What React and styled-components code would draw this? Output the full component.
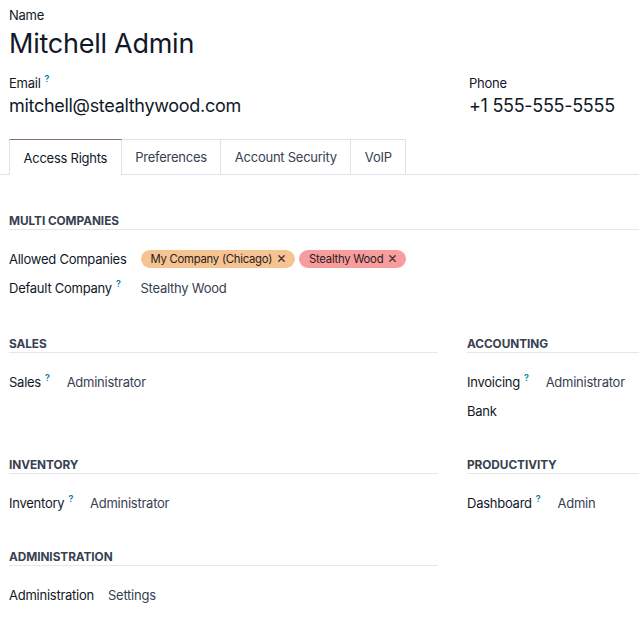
import React from 'react';
import styled, { createGlobalStyle } from 'styled-components';

const GlobalStyle = createGlobalStyle`
  body {
    margin: 0;
    background: #fff;
    font-family: Inter, "Noto Sans", "Liberation Sans", sans-serif;
    color: #111827;
    letter-spacing: -0.25px;
  }
`;

const tabs = ['Access Rights', 'Preferences', 'Account Security', 'VoIP'];

const CloseIcon = () => (
  <svg width="7" height="7" viewBox="0 0 7 7">
    <path d="M0.8 0.8 L6.2 6.2 M6.2 0.8 L0.8 6.2" stroke="currentColor" strokeWidth="1.4" strokeLinecap="round" />
  </svg>
);

export default function App() {
  return (
    <Sheet>
      <GlobalStyle />
      <Header>
        <div>
          <Label>Name</Label>
          <Title>Mitchell Admin</Title>
        </div>
        <Contacts>
          <Field>
            <Label>Email<Help>?</Help></Label>
            <BigValue>mitchell@stealthywood.com</BigValue>
          </Field>
          <Field>
            <Label>Phone</Label>
            <BigValue>+1 555-555-5555</BigValue>
          </Field>
        </Contacts>
      </Header>

      <TabBar>
        {tabs.map((t, i) => (
          <Tab key={t} active={i === 0}>{t}</Tab>
        ))}
      </TabBar>

      <Body>
        <Group>
          <GroupTitle>Multi Companies</GroupTitle>
          <Rows>
            <RowLabel>Allowed Companies</RowLabel>
            <Tags>
              <Tag color="#f5c492">My Company (Chicago)<X><CloseIcon /></X></Tag>
              <Tag color="#f79d9d">Stealthy Wood<X><CloseIcon /></X></Tag>
            </Tags>
            <RowLabel>Default Company<Help>?</Help></RowLabel>
            <RowValue>Stealthy Wood</RowValue>
          </Rows>
        </Group>

        <Columns>
          <Group>
            <GroupTitle>Sales</GroupTitle>
            <Rows>
              <RowLabel>Sales<Help>?</Help></RowLabel>
              <RowValue>Administrator</RowValue>
            </Rows>
          </Group>
          <Group>
            <GroupTitle>Accounting</GroupTitle>
            <Rows>
              <RowLabel>Invoicing<Help>?</Help></RowLabel>
              <RowValue>Administrator</RowValue>
              <RowLabel>Bank</RowLabel>
              <RowValue />
            </Rows>
          </Group>
          <Group>
            <GroupTitle>Inventory</GroupTitle>
            <Rows>
              <RowLabel>Inventory<Help>?</Help></RowLabel>
              <RowValue>Administrator</RowValue>
            </Rows>
          </Group>
          <Group>
            <GroupTitle>Productivity</GroupTitle>
            <Rows>
              <RowLabel>Dashboard<Help>?</Help></RowLabel>
              <RowValue>Admin</RowValue>
            </Rows>
          </Group>
          <Group>
            <GroupTitle>Administration</GroupTitle>
            <Rows>
              <RowLabel>Administration</RowLabel>
              <RowValue>Settings</RowValue>
            </Rows>
          </Group>
        </Columns>
      </Body>
    </Sheet>
  );
}

const Sheet = styled.div`
  width: 639px;
  height: 643px;
  overflow: hidden;
`;

const Header = styled.div`
  padding: 7px 0 0 9px;
`;

const Label = styled.div`
  font-size: 13px;
  line-height: 16px;
  color: #111827;
`;

const Help = styled.sup`
  color: #0180a5;
  font-size: 9px;
  font-weight: 600;
  margin: 0 3px 0 4px;
  vertical-align: 6px;
  line-height: 0;
`;

const Title = styled.h1`
  margin: 2px 0 0;
  font-size: 27px;
  font-weight: 400;
  line-height: 38px;
  color: #111827;
`;

const Contacts = styled.div`
  display: grid;
  grid-template-columns: 429px 1fr;
  column-gap: 31px;
  margin-top: 12px;
`;

const Field = styled.div`
  display: flex;
  flex-direction: column;
  gap: 2px;
`;

const BigValue = styled.div`
  font-size: 18px;
  line-height: 26px;
  letter-spacing: -0.3px;
  color: #111827;
`;

const TabBar = styled.div`
  display: flex;
  margin-top: 20px;
  padding-left: 9px;
  border-bottom: 1px solid #dee2e6;
`;

const Tab = styled.div`
  padding: 0 13.5px;
  display: flex;
  align-items: center;
  font-size: 13px;
  color: ${p => (p.active ? '#111827' : '#374151')};
  background: #fff;
  border: 1px solid #dee2e6;
  border-top-color: ${p => (p.active ? '#8a6a82' : '#dee2e6')};
  border-bottom: none;
  margin-bottom: ${p => (p.active ? '-1px' : '0')};
  height: ${p => (p.active ? '35px' : '34px')};
  & + & {
    border-left: none;
  }
`;

const Body = styled.div`
  padding: 39px 0 0 9px;
`;

const Columns = styled.div`
  display: grid;
  grid-template-columns: 429px 1fr;
  column-gap: 29px;
  row-gap: 33px;
  margin-top: 35px;
`;

const Group = styled.section`
  display: flex;
  flex-direction: column;
`;

const GroupTitle = styled.h3`
  margin: 0;
  font-size: 11.8px;
  font-weight: 700;
  line-height: 14px;
  letter-spacing: -0.05px;
  text-transform: uppercase;
  color: #374151;
  padding-bottom: 1px;
  border-bottom: 1px solid #e5e7eb;
`;

const Rows = styled.div`
  display: grid;
  grid-template-columns: max-content 1fr;
  column-gap: 14px;
  grid-auto-rows: 29px;
  align-items: center;
  margin-top: 14px;
`;

const RowLabel = styled.div`
  font-size: 13px;
  color: #111827;
  white-space: nowrap;
`;

const RowValue = styled.div`
  font-size: 13px;
  color: #374151;
  white-space: nowrap;
`;

const Tags = styled.div`
  display: flex;
  gap: 4px;
`;

const Tag = styled.span`
  display: inline-flex;
  align-items: center;
  height: 18px;
  padding: 0 10px;
  border-radius: 9px;
  background: ${p => p.color};
  font-size: 11.3px;
  color: #2b1b1b;
  white-space: nowrap;
`;

const X = styled.span`
  display: inline-flex;
  margin-left: 6px;
  color: #4b3434;
`;
